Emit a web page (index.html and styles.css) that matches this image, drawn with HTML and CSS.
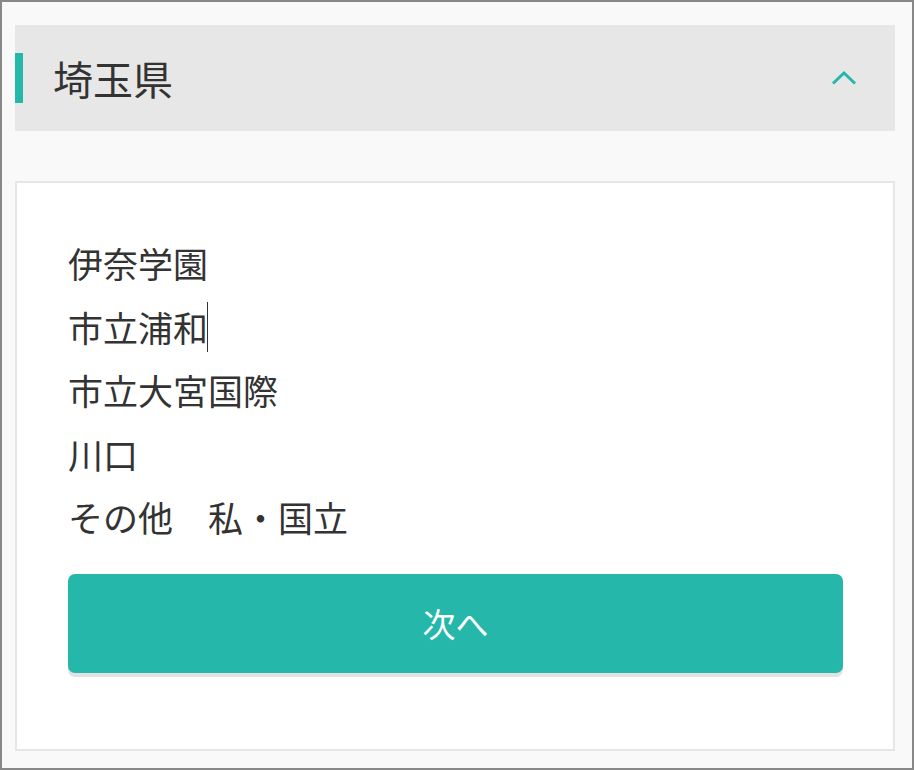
FILE: index.html
```html
<!DOCTYPE html>
<html lang="ja">
<head>
<meta charset="utf-8">
<link rel="stylesheet" href="styles.css">
</head>
<body>
<div class="frame">
  <div class="pref-header">
    <span class="accent"></span>
    <h2 class="pref-title">埼玉県</h2>
    <svg class="chevron" width="26" height="16" viewBox="0 0 26 16"><path d="M2 13.5 L13 3 L24 13.5" fill="none" stroke="#25b7aa" stroke-width="3"/></svg>
  </div>
  <div class="card">
    <ul class="school-list">
      <li>伊奈学園</li>
      <li>市立浦和<span class="caret"></span></li>
      <li>市立大宮国際</li>
      <li>川口</li>
      <li>その他　私・国立</li>
    </ul>
    <button class="next-btn">次へ</button>
  </div>
</div>
</body>
</html>
```
FILE: styles.css
```css
html, body {
  margin: 0;
  padding: 0;
}
body {
  font-family: "Noto Sans CJK JP", "Noto Sans", sans-serif;
  color: #333;
}
.frame {
  box-sizing: border-box;
  width: 914px;
  height: 770px;
  border: 2px solid #888;
  background: #f9f9f9;
  padding: 23px 17px 0 13px;
  display: flex;
  flex-direction: column;
  gap: 50px;
}
.pref-header {
  height: 106px;
  background: #e7e7e7;
  display: flex;
  align-items: center;
}
.accent {
  width: 8px;
  height: 50px;
  background: #25b7aa;
}
.pref-title {
  margin: 0 0 0 30px;
  font-size: 40px;
  font-weight: 400;
  line-height: 1;
  flex: 1;
}
.chevron {
  margin-right: 38px;
}
.card {
  box-sizing: border-box;
  height: 570px;
  background: #fff;
  border: 2px solid #e6e6e6;
  padding: 48px 50px 0 51px;
}
.school-list {
  list-style: none;
  margin: 0;
  padding: 0;
  font-size: 35px;
  line-height: 63.5px;
}
.school-list li {
  white-space: nowrap;
}
.caret {
  display: inline-block;
  width: 1px;
  height: 50px;
  background: #333;
  vertical-align: -10px;
  margin-left: -1px;
}
.next-btn {
  display: block;
  width: 100%;
  height: 99px;
  margin-top: 25px;
  border: none;
  border-radius: 7px;
  background: #25b7aa;
  color: #fff;
  font-family: "Noto Sans CJK JP", "Noto Sans", sans-serif;
  font-size: 33px;
  box-shadow: 0 4px 0 #e2e2e2;
  padding: 0;
}
```
